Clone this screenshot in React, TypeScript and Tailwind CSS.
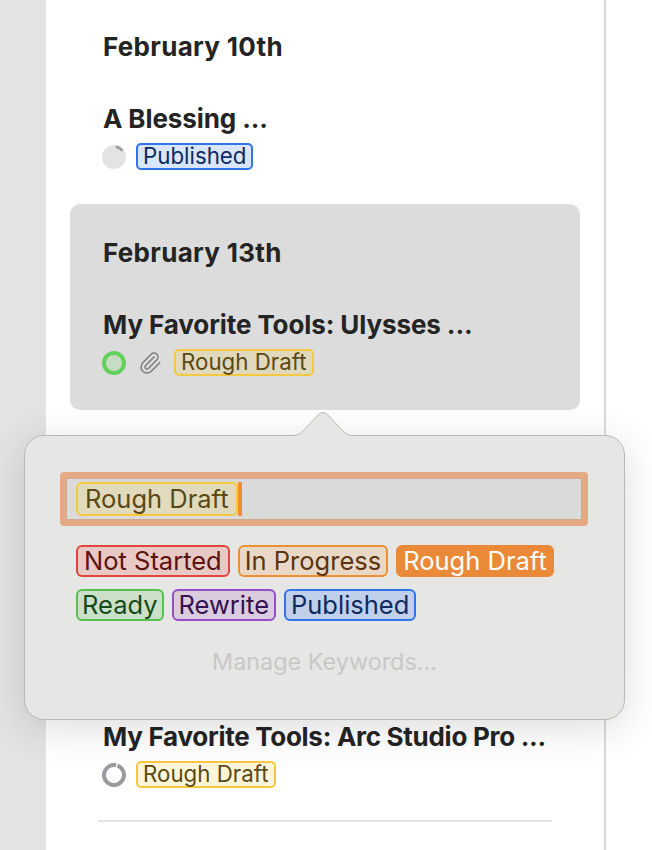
import { Paperclip } from 'lucide-react';

function Tag({ label, className }: { label: string; className: string }) {
  return (
    <span
      className={`inline-flex h-[27px] items-center rounded-[5px] border-2 px-[5px] text-[22.3px] leading-none whitespace-nowrap ${className}`}
    >
      {label}
    </span>
  );
}

function PopTag({ label, className }: { label: string; className: string }) {
  return (
    <span
      className={`inline-flex h-[32px] items-center rounded-[6px] border-2 text-[25.5px] leading-none whitespace-nowrap ${className}`}
    >
      {label}
    </span>
  );
}

export default function App() {
  return (
    <div className="relative flex h-[850px] w-[652px] overflow-hidden bg-white font-['Inter','Liberation_Sans',sans-serif] text-[#242424]">
      <div className="w-[46px] shrink-0 bg-[#e3e3e1]" />

      <div className="w-[560px] shrink-0 border-r-2 border-[#d9d9d9] pl-[24px] pr-[24px]">
        <div className="pl-[32px] pt-[32px]">
          <h2 className="ml-px text-[26px] leading-[30px] font-bold tracking-[0.3px]">February 10th</h2>
          <h3 className="ml-px mt-[42px] text-[26px] leading-[30px] font-bold tracking-[-0.1px]">A Blessing ...</h3>
          <div className="mt-[9px] flex h-[27px] items-center gap-[10px]">
            <svg width="24" height="24" viewBox="0 0 24 24" className="shrink-0">
              <circle cx="12" cy="12" r="12" fill="#e3e3e3" />
              <circle
                cx="12"
                cy="12"
                r="10.5"
                fill="none"
                stroke="#9d9d9d"
                strokeWidth="2.5"
                strokeDasharray="8 60"
                transform="rotate(-80 12 12)"
              />
            </svg>
            <Tag label="Published" className="border-[#2f74ea] bg-[#d8e5fb] text-[#0f2a5f]" />
          </div>
        </div>

        <div className="mt-[34px] h-[206px] w-[510px] rounded-[10px] bg-[#dcdcdc] pl-[32px] pt-[34px]">
          <h2 className="ml-px text-[26px] leading-[30px] font-bold tracking-[0.3px]">February 13th</h2>
          <h3 className="ml-px mt-[42px] text-[26px] leading-[30px] font-bold tracking-[-0.1px]">My Favorite Tools: Ulysses ...</h3>
          <div className="mt-[9px] flex h-[27px] items-center">
            <svg width="24" height="24" viewBox="0 0 24 24" className="shrink-0">
              <circle cx="12" cy="12" r="10" fill="#c6dcc3" stroke="#62d15c" strokeWidth="4" />
            </svg>
            <Paperclip size={24} strokeWidth={1.5} className="ml-[12px] text-[#7d7d7d]" />
            <Tag label="Rough Draft" className="ml-[12px] border-[#f6c840] bg-[#e0d9bd] text-[#5a4914]" />
          </div>
        </div>

        <div className="pl-[32px] pt-[312px]">
          <h3 className="ml-px text-[26px] leading-[30px] font-bold tracking-[-0.28px] whitespace-nowrap">
            My Favorite Tools: Arc Studio Pro ...
          </h3>
          <div className="mt-[9px] flex h-[27px] items-center gap-[10px]">
            <svg width="24" height="24" viewBox="0 0 24 24" className="shrink-0">
              <circle
                cx="12"
                cy="12"
                r="10"
                fill="#ffffff"
                stroke="#9a9a9e"
                strokeWidth="4"
                strokeDasharray="61 2"
                transform="rotate(-70 12 12)"
              />
            </svg>
            <Tag label="Rough Draft" className="border-[#f6c840] bg-[#fdf5d8] text-[#5a4914]" />
          </div>
          <div className="-ml-[4px] mt-[32px] h-[2px] w-[454px] bg-[#e3e3e3]" />
        </div>
      </div>

      <div className="absolute left-[24px] top-[435px] h-[285px] w-[601px] rounded-[20px] border border-[#b8b8b8] bg-[#e6e6e5] px-[35px] pt-[36px] shadow-[0_8px_40px_rgba(0,0,0,0.14)]">
        <svg
          width="60"
          height="27"
          viewBox="0 0 60 27"
          className="absolute left-[268px] top-[-25px]"
        >
          <path
            d="M0 24.5 C7 24.5 10 20 14 15.7 L25 4 Q30 -1 35 4 L48 18 C52 22 55 24.5 60 24.5 V27 H0 Z"
            fill="#e6e6e5"
          />
          <path
            d="M0 24.5 C7 24.5 10 20 14 15.7 L25 4 Q30 -1 35 4 L48 18 C52 22 55 24.5 60 24.5"
            fill="none"
            stroke="#b8b8b8"
            strokeWidth="1"
          />
        </svg>

        <div className="h-[54px] w-[528px] rounded-[4px] border-[6px] border-[#e3aa85] bg-[#dadada] pl-[10px] pt-[4px] shadow-[inset_0_0_0_1px_#d3a98d]">
          <div className="flex items-center">
            <span className="inline-flex h-[34px] items-center rounded-[6px] border-2 border-[#f6c840] bg-[#e2dabc] px-[7px] text-[25.5px] leading-none text-[#5a4914]">
              Rough Draft
            </span>
            <span className="h-[34px] w-[4px] rounded-[1px] bg-[#ee9030]" />
          </div>
        </div>

        <div className="ml-[16px] mt-[19px] flex gap-[8px]">
          <PopTag label="Not Started" className="border-[#e2453c] bg-[#e8c9c5] px-[6px] text-[#5a130f]" />
          <PopTag label="In Progress" className="border-[#ec9036] bg-[#e9d8c6] px-[5px] text-[#5c3411]" />
          <PopTag label="Rough Draft" className="border-[#ea8a39] bg-[#ea8a39] px-[5px] text-white" />
        </div>
        <div className="ml-[16px] mt-[12px] flex gap-[8px]">
          <PopTag label="Ready" className="border-[#55c04f] bg-[#cbe0c8] px-[4px] text-[#154a1a]" />
          <PopTag label="Rewrite" className="border-[#944fc4] bg-[#dbcbdf] px-[5px] text-[#33124f]" />
          <PopTag label="Published" className="border-[#2f74ea] bg-[#c1d0ea] px-[5px] text-[#0f2a5f]" />
        </div>

        <p className="mt-[27px] text-center text-[23.4px] leading-[28px] text-[#c8c8c8]">Manage Keywords...</p>
      </div>
    </div>
  );
}
